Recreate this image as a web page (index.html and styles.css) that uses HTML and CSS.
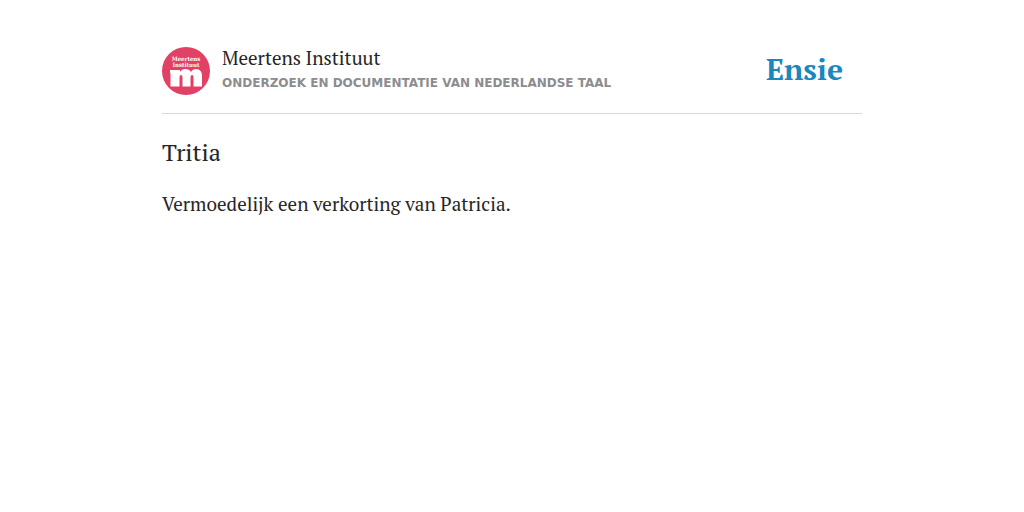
FILE: index.html
```
<!DOCTYPE html>
<html lang="nl">
<head>
    <meta charset="utf-8">
    <meta name="viewport" content="width=device-width, initial-scale=1">
    <title>Tritia - Meertens Instituut</title>
    <link rel="stylesheet" href="styles.css">
</head>
<body>
    <div class="container">
        <header class="header">
            <svg class="avatar" viewBox="0 0 48 48" role="img" aria-label="Meertens Instituut">
                <circle cx="24" cy="24" r="24" fill="#e24166"/>
                <text class="avatar-text" x="24" y="14">Meertens</text>
                <text class="avatar-text" x="24" y="20">Instituut</text>
                <path fill="#fff" d="M8 23h10v2c1-2 3-3 5-3 3 0 5 1 6 3 1-2 3-3 5-3 4 0 6 3 6 7v10.500h-8.500V31c0-2-.5-3-1.500-3s-1.500 1-1.500 3v8.500h-8V31c0-2-.5-3-1.500-3s-1.500 1-1.500 3v8.500H8.500V26H8z"/>
            </svg>
            <div class="author">
                <div class="author-name">Meertens Instituut</div>
                <div class="author-desc">Onderzoek en documentatie van Nederlandse taal</div>
            </div>
            <div class="logo">Ensie</div>
        </header>
        <main>
            <h1 class="title">Tritia</h1>
            <p class="definition">Vermoedelijk een verkorting van Patricia.</p>
        </main>
    </div>
</body>
</html>
```
FILE: styles.css
```
body {
    margin: 0;
    background: #fff;
    color: #262626;
    font-family: "PT Serif", "Liberation Serif", serif;
}

.container {
    max-width: 700px;
    margin: 0 auto;
    padding: 45px 20px 0;
}

.header {
    display: flex;
    align-items: center;
    padding-bottom: 16px;
    border-bottom: 1px solid #d9d9dc;
}

.avatar {
    width: 48px;
    height: 48px;
    margin-right: 12px;
    flex: none;
}

.avatar-text {
    fill: #fff;
    font-family: "DejaVu Serif Condensed", "DejaVu Serif", serif;
    font-size: 6px;
    font-weight: bold;
    text-anchor: middle;
}

.author {
    flex: 1;
    padding-bottom: 2px;
}

.author-name {
    font-size: 19px;
    line-height: 26px;
}

.author-desc {
    color: #8c8c91;
    font-family: "DejaVu Sans", sans-serif;
    font-size: 12px;
    font-weight: bold;
    line-height: 24px;
    text-transform: uppercase;
}

.logo {
    margin-right: 19px;
    padding-bottom: 4px;
    color: #1c86bf;
    font-size: 30px;
    font-weight: bold;
    line-height: 48px;
}

.title {
    margin: 21px 0 0;
    font-size: 24px;
    font-weight: normal;
    line-height: 34px;
}

.definition {
    margin: 21px 0 0;
    font-size: 19px;
    line-height: 28px;
}
```
